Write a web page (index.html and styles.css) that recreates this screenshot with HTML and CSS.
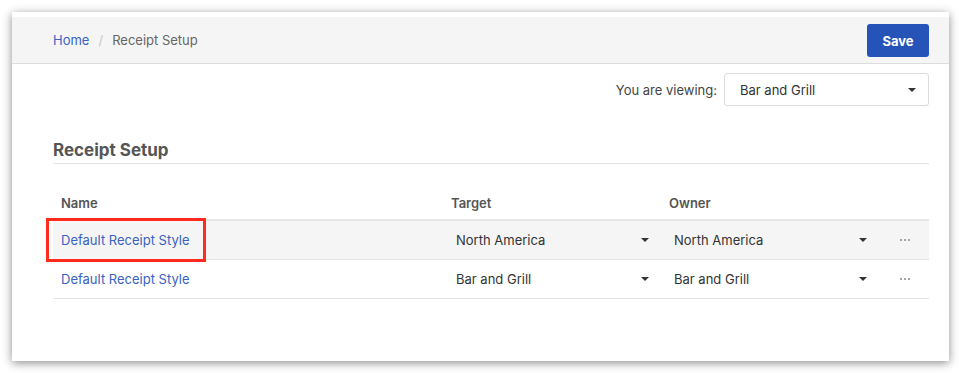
FILE: index.html
```html
<!DOCTYPE html>
<html>
<head>
<meta charset="utf-8">
<link rel="stylesheet" href="styles.css">
</head>
<body>
<div class="window">
  <header class="topbar">
    <nav class="crumbs">
      <a class="crumb-link" href="#">Home</a>
      <span class="crumb-sep">/</span>
      <span class="crumb-current">Receipt Setup</span>
    </nav>
    <button class="btn-save">Save</button>
  </header>
  <main class="content">
    <div class="viewing">
      <span class="viewing-label">You are viewing:</span>
      <div class="select select-view"><span>Bar and Grill</span><i class="caret"></i></div>
    </div>
    <h2 class="section-title">Receipt Setup</h2>
    <div class="table">
      <div class="row head">
        <div class="cell">Name</div>
        <div class="cell">Target</div>
        <div class="cell">Owner</div>
        <div class="cell"></div>
      </div>
      <div class="row shaded">
        <div class="cell"><a class="link" href="#">Default Receipt Style</a></div>
        <div class="cell"><div class="select"><span>North America</span><i class="caret"></i></div></div>
        <div class="cell"><div class="select"><span>North America</span><i class="caret"></i></div></div>
        <div class="cell actions"><span class="dots"><i></i><i></i><i></i></span></div>
        <span class="highlight"></span>
      </div>
      <div class="row">
        <div class="cell"><a class="link" href="#">Default Receipt Style</a></div>
        <div class="cell"><div class="select"><span>Bar and Grill</span><i class="caret"></i></div></div>
        <div class="cell"><div class="select"><span>Bar and Grill</span><i class="caret"></i></div></div>
        <div class="cell actions"><span class="dots"><i></i><i></i><i></i></span></div>
      </div>
    </div>
  </main>
</div>
</body>
</html>
```

FILE: styles.css
```css
* { box-sizing: border-box; }
html, body { margin: 0; padding: 0; background: #ffffff; }
body {
  font-family: Inter, "Noto Sans", sans-serif;
  font-size: 13px;
  color: #333;
  padding: 12px 10px 12px 12px;
}
.window {
  width: 937px;
  height: 349px;
  background: #fff;
  padding-top: 5px;
  box-shadow: 0 2px 9px rgba(0,0,0,0.45);
}
.topbar {
  height: 47px;
  background: #f5f5f5;
  border-bottom: 1px solid #dcdcdc;
  display: flex;
  align-items: center;
  justify-content: space-between;
  padding: 0 20px 0 41px;
}
.crumbs { display: flex; align-items: center; font-size: 13px; }
.crumb-link { color: #3a62c2; text-decoration: none; }
.crumb-sep { color: #c8c8c8; margin: 0 9px; }
.crumb-current { color: #666; }
.btn-save {
  font-family: inherit;
  width: 62px;
  height: 33px;
  background: #2553b8;
  color: #fff;
  border: none;
  border-radius: 3px;
  font-weight: 700;
  font-size: 13px;
  margin-top: 1px;
}
.content { padding: 9px 20px 0 41px; }
.viewing {
  display: flex;
  justify-content: flex-end;
  align-items: center;
  gap: 7px;
}
.viewing-label { color: #444; }
.select {
  display: flex;
  align-items: center;
  justify-content: space-between;
  color: #333;
}
.select-view {
  width: 205px;
  height: 33px;
  border: 1px solid #dcdcdc;
  border-radius: 3px;
  padding: 0 12px 0 15px;
}
.caret {
  width: 0; height: 0;
  border-left: 4px solid transparent;
  border-right: 4px solid transparent;
  border-top: 4px solid #333;
}
.section-title {
  margin: 34px 0 0 0;
  font-size: 17px;
  font-weight: 700;
  color: #555;
  line-height: 20px;
  padding-bottom: 3px;
  border-bottom: 1px solid #e2e2e2;
}
.table { margin-top: 22px; }
.row {
  position: relative;
  display: grid;
  grid-template-columns: 390px 218px 218px 1fr;
  height: 39px;
  align-items: center;
  border-bottom: 1px solid #e3e3e3;
}
.row.head {
  height: 35px;
  border-bottom: 2px solid #e6e6e6;
  font-weight: 600;
  color: #555;
}
.row.shaded { background: #f5f5f5; }
.cell { padding: 0 8px; }
.link { color: #3a62c2; text-decoration: none; }
.cell .select { padding: 0 4px 0 5px; }
.actions { display: flex; justify-content: center; padding: 0; }
.dots { display: flex; gap: 2px; padding-left: 2px; }
.dots i { width: 2px; height: 2px; border-radius: 50%; background: #888; display: block; }
.highlight {
  position: absolute;
  left: -7px;
  top: -3px;
  width: 160px;
  height: 44px;
  border: 3px solid #ff2b1c;
  pointer-events: none;
}
```
